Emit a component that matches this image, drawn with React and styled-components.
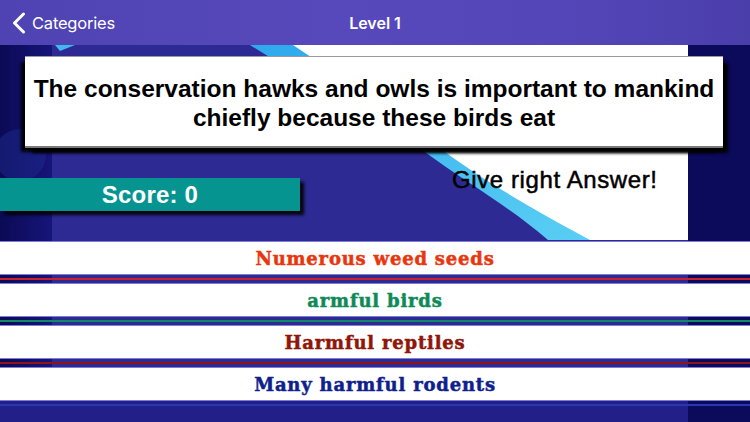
import React from "react";
import styled, { createGlobalStyle } from "styled-components";

const answers = [
  { text: "Numerous weed seeds", color: "#e8370f" },
  { text: "armful birds", color: "#0e8a57" },
  { text: "Harmful reptiles", color: "#8f1609" },
  { text: "Many harmful rodents", color: "#0f1f8e" },
];

const lineColors = ["#c8202c", "#0f8a66", "#8f1418", "#2a36b0"];

function Backdrop() {
  return (
    <BackdropSvg viewBox="0 0 750 377" preserveAspectRatio="none">
      <defs>
        <linearGradient id="leftStrip" x1="0" y1="0" x2="1" y2="0">
          <stop offset="0" stopColor="#0b0a55" />
          <stop offset="1" stopColor="#16157a" />
        </linearGradient>
        <linearGradient id="cyan" x1="0" y1="0" x2="1" y2="1">
          <stop offset="0" stopColor="#2fa8ee" />
          <stop offset="1" stopColor="#5fd3f4" />
        </linearGradient>
      </defs>
      <rect x="0" y="0" width="750" height="377" fill="#2d2a93" />
      <rect x="0" y="0" width="52" height="377" fill="url(#leftStrip)" />
      <circle cx="20" cy="110" r="26" fill="#1e2a8c" opacity="0.5" />
      <path d="M55 0 L75 0 L60 6 Z" fill="#3fb8f0" />
      <path d="M250 0 C 330 50 380 72 422 105 C 470 140 510 162 548 195 L688 195 L688 0 Z" fill="url(#cyan)" />
      <path d="M293 0 C 360 45 405 75 442 105 C 490 140 535 165 590 195 L688 195 L688 0 Z" fill="#ffffff" />
      <rect x="688" y="0" width="62" height="377" fill="#0c0a5a" />
      <rect x="0" y="355" width="688" height="22" fill="#221f88" />
    </BackdropSvg>
  );
}

export default function App() {
  return (
    <>
      <GlobalStyle />
      <Screen>
        <NavBar>
          <BackButton>
            <svg width="14" height="22" viewBox="0 0 14 22">
              <path
                d="M11.5 2 L2.5 11 L11.5 20"
                fill="none"
                stroke="#fff"
                strokeWidth="3"
                strokeLinecap="round"
                strokeLinejoin="round"
              />
            </svg>
            Categories
          </BackButton>
          <NavTitle>Level 1</NavTitle>
          <span />
        </NavBar>
        <Body>
          <Backdrop />
          <Content>
            <QuestionCard>
              The conservation hawks and owls is important to mankind
              <br />
              chiefly because these birds eat
            </QuestionCard>
            <ScoreRow>
              <ScoreBar>Score: 0</ScoreBar>
              <Hint>Give right Answer!</Hint>
            </ScoreRow>
            <AnswerList>
              {answers.map((a, i) => (
                <React.Fragment key={a.text}>
                  <AnswerRow $color={a.color}>{a.text}</AnswerRow>
                  <Divider $color={lineColors[i]} />
                </React.Fragment>
              ))}
            </AnswerList>
          </Content>
        </Body>
      </Screen>
    </>
  );
}

const GlobalStyle = createGlobalStyle`
  html, body {
    margin: 0;
    padding: 0;
    background: #2d2a93;
  }
  * {
    box-sizing: border-box;
  }
`;

const Screen = styled.div`
  width: 750px;
  height: 422px;
  display: flex;
  flex-direction: column;
  overflow: hidden;
`;

const NavBar = styled.div`
  height: 45px;
  flex-shrink: 0;
  display: grid;
  grid-template-columns: 1fr auto 1fr;
  align-items: center;
  padding: 0 12px;
  background: linear-gradient(to right, #4f43b3, #5749bb 45%, #5446b8 75%, #4a3eab);
  color: #fff;
  font-family: Inter, "Liberation Sans", sans-serif;
`;

const BackButton = styled.div`
  display: flex;
  align-items: center;
  gap: 6px;
  font-size: 16.5px;
  letter-spacing: -0.2px;
`;

const NavTitle = styled.div`
  font-size: 16px;
  font-weight: 600;
`;

const Body = styled.div`
  flex: 1;
  display: grid;
  & > * {
    grid-area: 1 / 1;
  }
`;

const BackdropSvg = styled.svg`
  width: 100%;
  height: 100%;
  display: block;
`;

const Content = styled.div`
  display: flex;
  flex-direction: column;
  padding-top: 11px;
  font-family: "Liberation Sans", Arial, sans-serif;
`;

const QuestionCard = styled.div`
  margin: 0 27px 0 25px;
  height: 92px;
  display: flex;
  align-items: center;
  justify-content: center;
  text-align: center;
  background: #fff;
  border-top: 1px solid #9a9a9a;
  border-bottom: 2px solid #7a7a7a;
  box-shadow: -5px 5px 3px -1px #000, 6px 6px 3px -1px #000;
  color: #000;
  font-size: 24.5px;
  font-weight: 700;
  line-height: 29px;
  padding-top: 2px;
`;

const ScoreRow = styled.div`
  margin-top: 20px;
  display: flex;
  align-items: flex-start;
`;

const ScoreBar = styled.div`
  margin-top: 10px;
  width: 300px;
  height: 33px;
  display: flex;
  align-items: center;
  justify-content: center;
  background: #069490;
  box-shadow: 4px 4px 3px rgba(0, 0, 0, 0.9);
  color: #fff;
  font-size: 24px;
  font-weight: 700;
  letter-spacing: 0.2px;
`;

const Hint = styled.div`
  margin-left: 152px;
  margin-top: -2px;
  font-size: 24px;
  line-height: 28px;
  letter-spacing: 0.6px;
  color: #000;
  -webkit-text-stroke: 0.5px #000;
`;

const AnswerList = styled.div`
  margin-top: 30px;
  display: flex;
  flex-direction: column;
`;

const AnswerRow = styled.div`
  height: 34px;
  display: flex;
  align-items: center;
  justify-content: center;
  background: #fff;
  border-top: 1px solid #7f7cd8;
  border-bottom: 1px solid #7f7cd8;
  color: ${(p) => p.$color};
  font-family: "DejaVu Serif", "Liberation Serif", serif;
  font-size: 18px;
  font-weight: 700;
  letter-spacing: 0.8px;
  -webkit-text-stroke: 0.5px ${(p) => p.$color};
`;

const Divider = styled.div`
  height: 8px;
  display: flex;
  align-items: center;
  &::before {
    content: "";
    display: block;
    width: 100%;
    height: 2px;
    background: ${(p) => p.$color};
  }
`;
